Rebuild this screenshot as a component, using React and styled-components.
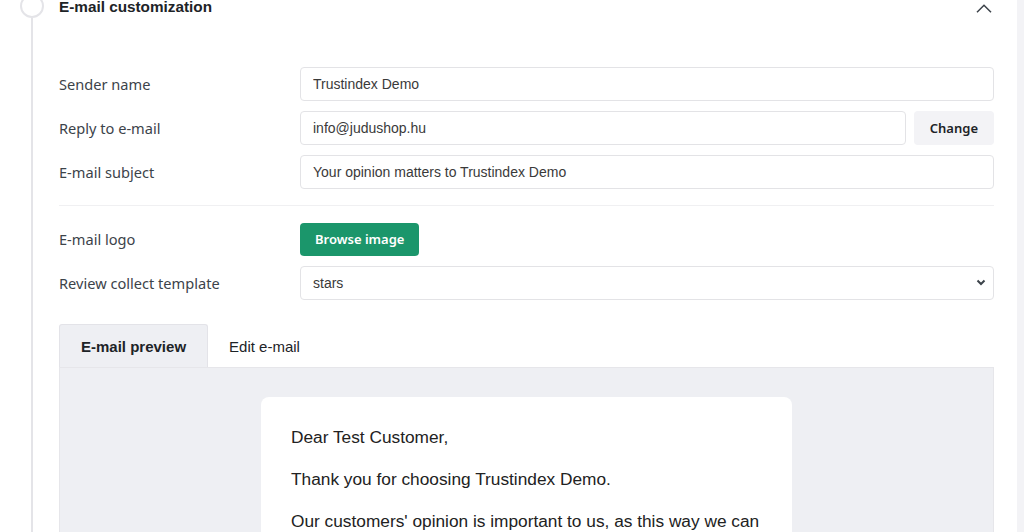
import styled, { createGlobalStyle } from "styled-components";

const GlobalStyle = createGlobalStyle`
  html, body {
    margin: 0;
    padding: 0;
    background: #f3f3f6;
    overflow: hidden;
  }
  * { box-sizing: border-box; }
`;

const Page = styled.div`
  display: flex;
  height: 532px;
  overflow: hidden;
`;

const Card = styled.div`
  width: 1017px;
  background: #fff;
  display: flex;
  gap: 15px;
  padding: 0 23px 0 20px;
`;

const Rail = styled.div`
  width: 24px;
  display: flex;
  flex-direction: column;
  align-items: center;
  flex-shrink: 0;
`;

const Dot = styled.div`
  width: 24px;
  height: 24px;
  margin-top: -6px;
  border: 2px solid #e4e4e8;
  border-radius: 50%;
  background: #fff;
`;

const Line = styled.div`
  flex: 1;
  width: 2px;
  background: #e4e4e8;
`;

const Content = styled.div`
  flex: 1;
  display: flex;
  flex-direction: column;
`;

const Header = styled.div`
  display: flex;
  justify-content: space-between;
  align-items: center;
  margin-top: -2px;
  height: 18px;
`;

const Title = styled.h2`
  margin: 0;
  font-family: "Liberation Sans", Arial, sans-serif;
  font-size: 15.3px;
  font-weight: 700;
  line-height: 18px;
  color: #1d2327;
`;

const Toggle = styled.button`
  border: 0;
  background: none;
  padding: 0 2px 0 0;
  display: flex;
  color: #3c434a;
  margin-top: 2px;
`;

const Form = styled.div`
  margin-top: 51px;
  display: flex;
  flex-direction: column;
  gap: 10px;
`;

const Row = styled.div`
  display: flex;
  align-items: center;
  min-height: 34px;
`;

const Label = styled.label`
  width: 241px;
  flex-shrink: 0;
  font-family: "Noto Sans", "Open Sans", sans-serif;
  font-size: 14.6px;
  color: #3c434a;
`;

const Field = styled.div`
  flex: 1;
  display: flex;
  gap: 8px;
  position: relative;
`;

const Input = styled.input`
  flex: 1;
  height: 34px;
  padding: 0 12px;
  border: 1px solid #e3e3e6;
  border-radius: 4px;
  font-family: "Liberation Sans", Arial, sans-serif;
  font-size: 14px;
  color: #3a3a3a;
  background: #fff;
  outline: none;
`;

const Select = styled.select`
  flex: 1;
  height: 34px;
  padding: 0 12px;
  border: 1px solid #e3e3e6;
  border-radius: 4px;
  font-family: "Liberation Sans", Arial, sans-serif;
  font-size: 14px;
  color: #3a3a3a;
  background: #fff;
  appearance: none;
  outline: none;
`;

const SelectArrow = styled.span`
  position: absolute;
  right: 8px;
  top: 13px;
  display: flex;
  pointer-events: none;
`;

const Button = styled.button`
  height: ${(p) => (p.$primary ? "33px" : "34px")};
  padding: 0 ${(p) => (p.$primary ? "15px" : "16px")};
  border: 0;
  border-radius: 4px;
  font-family: "Noto Sans", "Open Sans", sans-serif;
  font-size: 13px;
  font-weight: 600;
  background: ${(p) => (p.$primary ? "#1b966b" : "#f3f3f6")};
  color: ${(p) => (p.$primary ? "#fff" : "#1d2327")};
  cursor: pointer;
`;

const Divider = styled.hr`
  margin: 6px 0;
  border: 0;
  border-top: 1px solid #f0f0f2;
`;

const Tabs = styled.div`
  display: flex;
  margin-top: 24px;
`;

const Tab = styled.div`
  padding: 0 21px 1px ${(p) => (p.$active ? "21px" : "20px")};
  height: 44px;
  display: flex;
  align-items: center;
  font-family: "Liberation Sans", Arial, sans-serif;
  font-size: 15px;
  font-weight: ${(p) => (p.$active ? 700 : 400)};
  color: #1d2327;
  background: ${(p) => (p.$active ? "#eeeff3" : "transparent")};
  border: 1px solid ${(p) => (p.$active ? "#e3e3e8" : "transparent")};
  border-bottom: 0;
  border-radius: 3px 3px 0 0;
  margin-bottom: -1px;
`;

const Preview = styled.div`
  flex: 1;
  background: #eeeff3;
  border: 1px solid #e6e6ea;
  border-bottom: 0;
  padding-top: 29px;
  display: flex;
  justify-content: center;
`;

const Mail = styled.div`
  width: 531px;
  height: 200px;
  background: #fff;
  border-radius: 8px;
  padding: 27px 30px;
  font-family: "Liberation Sans", Arial, sans-serif;
  font-size: 17.3px;
  line-height: 26px;
  color: #222;
`;

const Para = styled.p`
  margin: 0 0 16px;
`;

const Chevron = () => (
  <svg width="16" height="9" viewBox="0 0 16 9" fill="none">
    <polyline points="1,8.3 8,1.3 15,8.3" stroke="currentColor" strokeWidth="1.5" />
  </svg>
);

const Caret = () => (
  <svg width="10" height="7" viewBox="0 0 10 7" fill="none">
    <polyline points="1.5,1.5 5,5 8.5,1.5" stroke="#3c434a" strokeWidth="2" />
  </svg>
);

export default function App() {
  return (
    <>
      <GlobalStyle />
      <Page>
        <Card>
          <Rail>
            <Dot />
            <Line />
          </Rail>
          <Content>
            <Header>
              <Title>E-mail customization</Title>
              <Toggle>
                <Chevron />
              </Toggle>
            </Header>

            <Form>
              <Row>
                <Label>Sender name</Label>
                <Field>
                  <Input defaultValue="Trustindex Demo" />
                </Field>
              </Row>
              <Row>
                <Label>Reply to e-mail</Label>
                <Field>
                  <Input defaultValue="info@judushop.hu" />
                  <Button>Change</Button>
                </Field>
              </Row>
              <Row>
                <Label>E-mail subject</Label>
                <Field>
                  <Input defaultValue="Your opinion matters to Trustindex Demo" />
                </Field>
              </Row>
              <Divider />
              <Row>
                <Label>E-mail logo</Label>
                <Field>
                  <Button $primary>Browse image</Button>
                </Field>
              </Row>
              <Row>
                <Label>Review collect template</Label>
                <Field>
                  <Select defaultValue="stars">
                    <option value="stars">stars</option>
                    <option value="smiley">smiley</option>
                  </Select>
                  <SelectArrow>
                    <Caret />
                  </SelectArrow>
                </Field>
              </Row>
            </Form>

            <Tabs>
              <Tab $active>E-mail preview</Tab>
              <Tab>Edit e-mail</Tab>
            </Tabs>
            <Preview>
              <Mail>
                <Para>Dear Test Customer,</Para>
                <Para>Thank you for choosing Trustindex Demo.</Para>
                <Para>
                  Our customers' opinion is important to us, as this way we can
                  improve our services.
                </Para>
              </Mail>
            </Preview>
          </Content>
        </Card>
      </Page>
    </>
  );
}
